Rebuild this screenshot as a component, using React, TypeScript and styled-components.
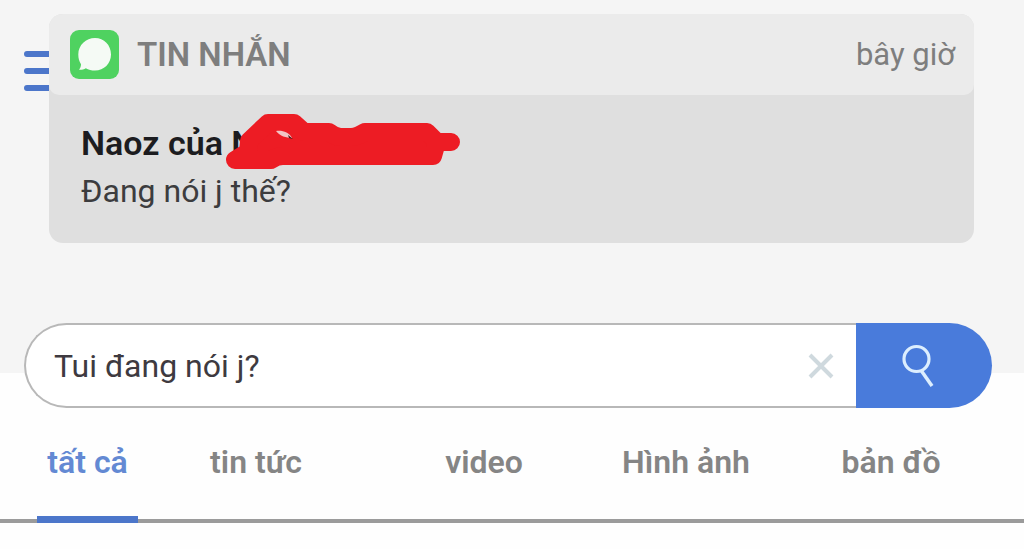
import React, { useState } from "react";
import styled, { createGlobalStyle } from "styled-components";

const GlobalStyle = createGlobalStyle`
  * { box-sizing: border-box; }
  body {
    margin: 0;
    background: #fefefe;
    font-family: Roboto, "Noto Sans", sans-serif;
    font-size: 32px;
  }
  button, input { font: inherit; color: inherit; }
`;

const TopBand = styled.header`
  display: flex;
  align-items: flex-start;
  padding: 14px 50px 130px 24px;
  background: #f5f5f5;
`;

const MenuButton = styled.button`
  flex: none;
  display: flex;
  flex-direction: column;
  gap: 11px;
  width: 48px;
  margin: 37px -23px 0 0;
  padding: 0;
  border: 0;
  background: none;
`;

const MenuBar = styled.span`
  height: 6px;
  border-radius: 3px;
  background: #4c76ca;
`;

const Notification = styled.article`
  position: relative;
  flex: 1;
  border-radius: 14px;
  background: #dfdfdf;
`;

const NotificationHead = styled.div`
  display: flex;
  align-items: center;
  height: 81px;
  padding: 0 19px 0 21px;
  border-radius: 14px 14px 10px 10px;
  background: #ebebeb;
  color: #7e7e7e;
`;

const AppName = styled.h2`
  flex: 1;
  margin: 0 0 0 18px;
  font-size: 33px;
  font-weight: 600;
  line-height: 40px;
`;

const Time = styled.time`
  font-size: 31px;
  line-height: 40px;
`;

const NotificationBody = styled.div`
  padding: 24px 32px 28px;
  line-height: 48px;
`;

const Sender = styled.h3`
  position: relative;
  margin: 0;
  font-size: 34px;
  font-weight: 600;
  color: #1c1c20;
`;

const Scribble = styled.svg`
  position: absolute;
  left: 144px;
  top: -8px;
`;

const Message = styled.p`
  margin: 0;
  color: #3c3c3e;
`;

const SearchForm = styled.form`
  display: flex;
  height: 85px;
  margin: -50px 32px 0 24px;
`;

const SearchField = styled.div`
  flex: 1;
  display: flex;
  align-items: center;
  padding: 0 21px 0 28px;
  border: 2px solid #b8b8b8;
  border-right: 0;
  border-radius: 43px 0 0 43px;
  background: #fff;
`;

const SearchInput = styled.input`
  flex: 1;
  min-width: 0;
  padding: 0;
  border: 0;
  outline: 0;
  background: none;
  color: #3e3a40;
`;

const ClearButton = styled.button`
  display: flex;
  padding: 0;
  border: 0;
  background: none;
`;

const SearchButton = styled.button`
  display: flex;
  align-items: center;
  justify-content: center;
  width: 136px;
  padding: 0 12px 0 0;
  border: 0;
  border-radius: 0 43px 43px 0;
  background: #497bdb;
`;

const Tabs = styled.nav`
  display: grid;
  grid-template-columns: 101fr 236fr 220fr 184fr 226fr;
  height: 115px;
  padding: 0 20px 0 37px;
  border-bottom: 4px solid #9b9b9b;
`;

const Tab = styled.a<{ $active?: boolean }>`
  height: 115px;
  padding-top: 34px;
  border-bottom: 7px solid ${(p) => (p.$active ? "#4c76ca" : "transparent")};
  color: ${(p) => (p.$active ? "#6389d3" : "#858585")};
  font-size: 32px;
  font-weight: 600;
  line-height: 40px;
  text-align: center;
  text-decoration: none;
  white-space: nowrap;
`;

const tabs = ["tất cả", "tin tức", "video", "Hình ảnh", "bản đồ"];

const MessagesIcon = () => (
  <svg width="49" height="49" viewBox="0 0 49 49" aria-hidden="true">
    <rect width="49" height="49" rx="9" fill="#4fd260" />
    <path
      d="M25 8C34 8 41 15 41 24.500C41 33.500 34 40.500 25 40.500C21.500 40.500 18.500 39.700 15.800 38.200C14 39.300 11.500 40 9 39.800C10.300 38.200 11 36.500 11 34.200C9.200 31.500 8.300 28.300 8.300 24.500C8.300 15 16 8 25 8Z"
      fill="#f5faf5"
    />
  </svg>
);

export default function App() {
  const [query, setQuery] = useState("Tui đang nói j?");
  return (
    <>
      <GlobalStyle />
      <TopBand>
        <MenuButton aria-label="Menu">
          <MenuBar />
          <MenuBar />
          <MenuBar />
        </MenuButton>
        <Notification>
          <NotificationHead>
            <MessagesIcon />
            <AppName>TIN NHẮN</AppName>
            <Time>bây giờ</Time>
          </NotificationHead>
          <NotificationBody>
            <Sender>
              Naoz của N
              <Scribble width="238" height="60" viewBox="0 0 238 60" aria-hidden="true">
                <path
                  d="M10 49L23 41L24 30L43 12H69L79 21H104Q110 26 116 26H126Q132 26 140 21H202L212 31H226H212L208 45H58Q52 45 46 49Z"
                  fill="#ed1c24"
                  stroke="#ed1c24"
                  strokeWidth="18"
                  strokeLinejoin="round"
                />
                <path d="M51 20C57 19 64 21 67 27C61 27 55 25 51 20Z" fill="#f2c4c4" />
                <path d="M63 24L68 28L64 27Z" fill="#4a1518" />
              </Scribble>
            </Sender>
            <Message>Đang nói j thế?</Message>
          </NotificationBody>
        </Notification>
      </TopBand>
      <main>
        <SearchForm role="search" onSubmit={(e) => e.preventDefault()}>
          <SearchField>
            <SearchInput
              aria-label="Tìm kiếm"
              value={query}
              onChange={(e) => setQuery(e.target.value)}
            />
            <ClearButton type="button" aria-label="Xóa" onClick={() => setQuery("")}>
              <svg width="28" height="28" viewBox="0 0 28 28">
                <path d="M3 3L25 25M25 3L3 25" fill="none" stroke="#cfd9de" strokeWidth="4" />
              </svg>
            </ClearButton>
          </SearchField>
          <SearchButton aria-label="Tìm">
            <svg width="34" height="44" viewBox="0 0 34 44">
              <circle cx="15.500" cy="15" r="12.500" fill="none" stroke="#dceefe" strokeWidth="3.200" />
              <path d="M20.500 27L31 42" fill="none" stroke="#dceefe" strokeWidth="3.500" />
            </svg>
          </SearchButton>
        </SearchForm>
        <Tabs>
          {tabs.map((label, i) => (
            <Tab key={label} href="#" $active={i === 0}>
              {label}
            </Tab>
          ))}
        </Tabs>
      </main>
    </>
  );
}
